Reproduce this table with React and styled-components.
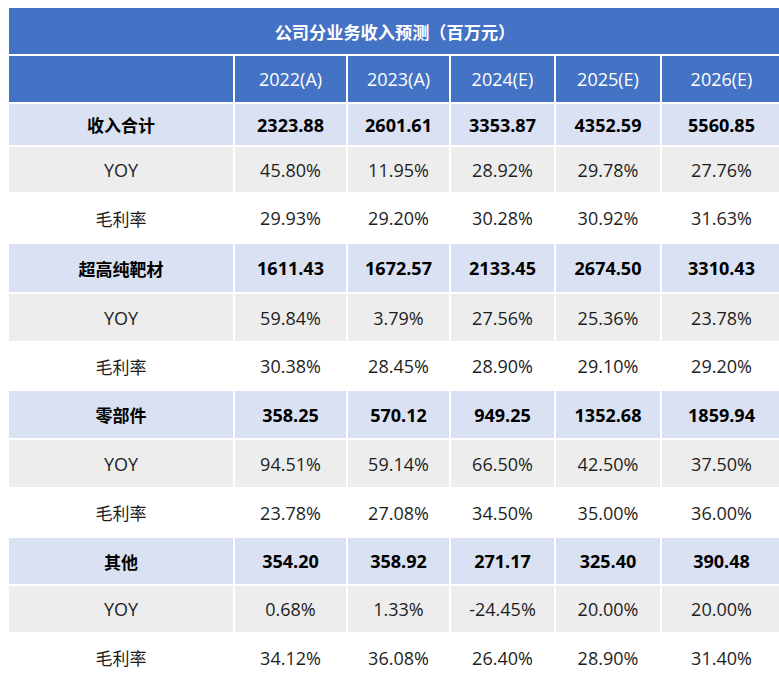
import React from 'react';
import styled, { createGlobalStyle } from 'styled-components';

const GlobalStyle = createGlobalStyle`
  html, body {
    margin: 0;
    padding: 0;
    background: #FFFFFF;
    overflow: hidden;
  }
  body {
    font-family: 'Open Sans', 'Noto Sans CJK SC', sans-serif;
  }
`;

const COLS = '224px 111px 101px 103px 104px 119px';

const Page = styled.div`
  padding: 8px 0 0 9px;
  width: 772px;
`;

const Table = styled.div`
  display: flex;
  flex-direction: column;
  gap: 2px;
  background: #FFFFFF;
`;

const TitleBar = styled.div`
  height: 46px;
  background: #4472C4;
  color: #FFFFFF;
  display: flex;
  align-items: center;
  justify-content: center;
  font-family: 'Noto Sans CJK SC', sans-serif;
  font-size: 17.2px;
  font-weight: 700;
`;

const Row = styled.div`
  display: grid;
  grid-template-columns: ${COLS};
  column-gap: 2px;
  height: ${p => p.$h}px;
`;

const bgFor = {
  head: '#4472C4',
  total: '#D9E1F2',
  yoy: '#EDEDED',
  margin: '#FFFFFF',
};

const Cell = styled.div`
  background: ${p => bgFor[p.$kind]};
  color: ${p => (p.$kind === 'head' ? '#FFFFFF' : p.$kind === 'total' ? '#000000' : '#1E1E1E')};
  font-weight: ${p => (p.$kind === 'total' ? 700 : 400)};
  font-size: 18px;
  display: flex;
  align-items: center;
  justify-content: center;
  white-space: nowrap;
`;

const Label = styled(Cell)`
  font-family: 'Noto Sans CJK SC', sans-serif;
  font-size: ${p => (p.$latin ? '18px' : '17px')};
  ${p => p.$latin && "font-family: 'Open Sans', sans-serif;"}
`;

const years = ['2022(A)', '2023(A)', '2024(E)', '2025(E)', '2026(E)'];

const rows = [
  { kind: 'total', label: '收入合计', h: 41, values: ['2323.88', '2601.61', '3353.87', '4352.59', '5560.85'] },
  { kind: 'yoy', label: 'YOY', h: 45, values: ['45.80%', '11.95%', '28.92%', '29.78%', '27.76%'] },
  { kind: 'margin', label: '毛利率', h: 48, values: ['29.93%', '29.20%', '30.28%', '30.92%', '31.63%'] },
  { kind: 'total', label: '超高纯靶材', h: 48, values: ['1611.43', '1672.57', '2133.45', '2674.50', '3310.43'] },
  { kind: 'yoy', label: 'YOY', h: 47, values: ['59.84%', '3.79%', '27.56%', '25.36%', '23.78%'] },
  { kind: 'margin', label: '毛利率', h: 46, values: ['30.38%', '28.45%', '28.90%', '29.10%', '29.20%'] },
  { kind: 'total', label: '零部件', h: 47, values: ['358.25', '570.12', '949.25', '1352.68', '1859.94'] },
  { kind: 'yoy', label: 'YOY', h: 47, values: ['94.51%', '59.14%', '66.50%', '42.50%', '37.50%'] },
  { kind: 'margin', label: '毛利率', h: 47, values: ['23.78%', '27.08%', '34.50%', '35.00%', '36.00%'] },
  { kind: 'total', label: '其他', h: 46, values: ['354.20', '358.92', '271.17', '325.40', '390.48'] },
  { kind: 'yoy', label: 'YOY', h: 46, values: ['0.68%', '1.33%', '-24.45%', '20.00%', '20.00%'] },
  { kind: 'margin', label: '毛利率', h: 47, values: ['34.12%', '36.08%', '26.40%', '28.90%', '31.40%'] },
];

export default function App() {
  return (
    <Page>
      <GlobalStyle />
      <Table>
        <TitleBar>公司分业务收入预测（百万元）</TitleBar>
        <Row $h={46}>
          <Cell $kind="head" />
          {years.map(y => (
            <Cell key={y} $kind="head">{y}</Cell>
          ))}
        </Row>
        {rows.map((r, i) => (
          <Row key={i} $h={r.h}>
            <Label $kind={r.kind} $latin={r.label === 'YOY'}>{r.label}</Label>
            {r.values.map((v, j) => (
              <Cell key={j} $kind={r.kind}>{v}</Cell>
            ))}
          </Row>
        ))}
      </Table>
    </Page>
  );
}
